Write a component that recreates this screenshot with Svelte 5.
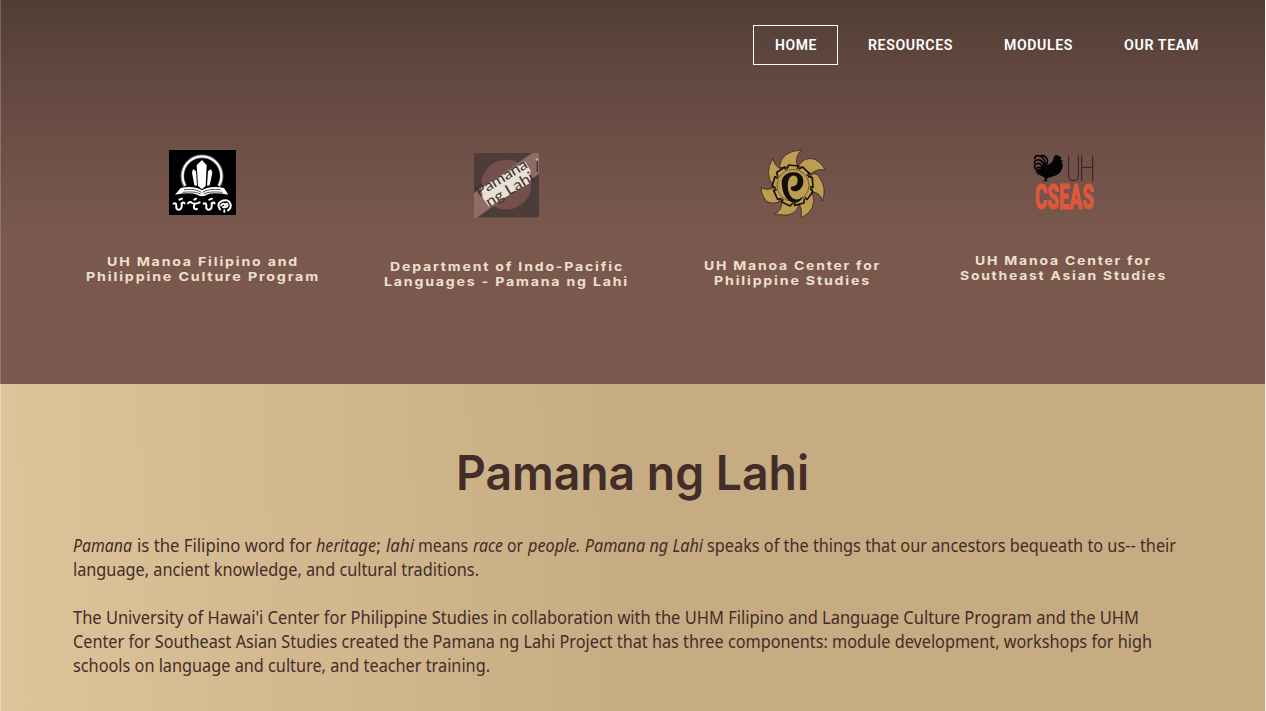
<script>
  const nav = [
    { label: 'HOME', w: 42, active: true },
    { label: 'RESOURCES', w: 85 },
    { label: 'MODULES', w: 69 },
    { label: 'OUR TEAM', w: 75 }
  ];
  const partners = [
    { logo: 'book', top: 150, gap: 39, lines: [['UH Manoa Filipino and', 192], ['Philippine Culture Program', 234]] },
    { logo: 'lahi', top: 153, gap: 41, lines: [['Department of Indo-Pacific', 234], ['Languages - Pamana ng Lahi', 245]] },
    { logo: 'sun', top: 149, gap: 39, lines: [['UH Manoa Center for', 177], ['Philippine Studies', 157]] },
    { logo: 'cseas', top: 153, gap: 42, lines: [['UH Manoa Center for', 177], ['Southeast Asian Studies', 207]] }
  ];
  const paragraphs = [
    [
      [
        ['Pamana', 59, true], ['is the Filipino word for', 175], ['heritage', 60, true, ';', 5], ['lahi', 28, true],
        ['means', 50], ['race', 30, true], ['or', 16], ['people. Pamana ng Lahi', 175, true],
        ['speaks of the things that our ancestors bequeath to us-- their', 469]
      ],
      [['language, ancient knowledge, and cultural traditions.', 406]]
    ],
    [
      [["The University of Hawai'i Center for Philippine Studies in collaboration with the UHM Filipino and Language Culture Program and the UHM", 1066]],
      [['Center for Southeast Asian Studies created the Pamana ng Lahi Project that has three components: module development, workshops for high', 1079]],
      [['schools on language and culture, and teacher training.', 417]]
    ]
  ];

  // Condenses or widens a run of text so that it takes exactly `width` pixels in the line.
  function fit(node, width) {
    const natural = node.getBoundingClientRect().width;
    node.style.transform = `scaleX(${width / natural})`;
    node.style.marginRight = `${width - natural}px`;
  }
</script>

<div class="page">
  <header>
    <nav>
      {#each nav as item}
        <a class:active={item.active}><span class="fit" use:fit={item.w}>{item.label}</span></a>
      {/each}
    </nav>
    <div class="partners">
      {#each partners as p}
        <div class="partner" style="padding-top: {p.top - 90}px">
          {#if p.logo === 'book'}
            <svg width="67" height="65" viewBox="27 24 201 195">
              <rect x="27" y="24" width="201" height="195" fill="#000" />
              <path d="M75 132A59 59 0 1 1 177 132" fill="none" stroke="#777" stroke-width="11" />
              <path d="M76 131A58 58 0 1 1 176 131" fill="none" stroke="#fff" stroke-width="6" />
              <g fill="#fff">
                <path d="M126 54L140 70L137 132L126 142L114 132L110 70Z" />
                <path d="M99 81L108 88L111 131L103 130L96 92Z" />
                <path d="M153 81L144 88L141 131L149 130L157 92Z" />
              </g>
              <path d="M62 138Q100 130 126 145Q152 130 192 138L205 158Q160 150 140 158Q126 168 112 158Q90 150 45 158Z" fill="#fff" />
              <path d="M72 143Q105 139 124 151M182 143Q147 139 128 151M68 151Q105 147 122 156M188 151Q147 147 131 156" fill="none" stroke="#000" stroke-width="2" />
              <g fill="none" stroke="#fff" stroke-width="6" stroke-linecap="round">
                <path d="M41 185Q48 181 49 190Q47 204 57 203Q67 202 65 184Q70 180 74 184M58 173L66 170" />
                <path d="M84 184Q90 177 96 183Q105 188 119 181M103 187Q98 204 111 201M103 173L108 170" />
                <path d="M131 185Q138 181 139 190Q137 204 147 203Q157 202 155 184Q160 180 164 184M148 173L156 170" />
                <path d="M180 202Q169 186 183 178Q205 168 212 187Q213 200 204 205M183 190Q191 180 195 190Q201 180 203 190Q201 198 189 195M193 205L193 209" />
              </g>
            </svg>
          {:else if p.logo === 'lahi'}
            <svg width="65" height="65" viewBox="27 24 195 195">
              <clipPath id="disc"><circle cx="124" cy="119" r="75" /></clipPath>
              <rect x="27" y="24" width="195" height="193" rx="4" fill="#4d3c39" />
              <circle cx="124" cy="119" r="75" fill="#754f4c" />
              <path d="M27 144L202 24H222V86L35 218H27Z" fill="#906b68" />
              <path d="M49 128L181 50L196 76V113L72 185L54 160Z" fill="#e9e1d8" />
              <g fill="#41302d" font-family="Lato, sans-serif" font-size="44">
                <text transform="translate(42 156) rotate(-31)" textLength="174" lengthAdjust="spacingAndGlyphs">Pamana</text>
                <text transform="translate(73 187) rotate(-31)" textLength="160" lengthAdjust="spacingAndGlyphs">ng Lahi</text>
              </g>
              <path d="M217 49V81" stroke="#41302d" stroke-width="4" />
              <circle cx="216" cy="43" r="4" fill="#e3a94d" />
            </svg>
          {:else if p.logo === 'sun'}
            <svg width="66" height="70" viewBox="24 22 198 210">
              <g fill="#bc9d52" stroke="#33281b" stroke-width="2.5" stroke-linejoin="round">
                <path d="M82 78Q86 28 148 25Q127 48 136 72Z" />
                <path d="M140 72Q157 43 189 53Q205 60 221 85Q195 80 178 96Z" />
                <path d="M178 98Q194 92 202 107Q225 137 212 178Q203 151 181 151Z" />
                <path d="M181 151Q198 205 147 229Q153 207 141 184Z" />
                <path d="M142 183Q133 233 68 216Q91 207 89 180Z" />
                <path d="M82 181Q44 193 33 163Q27 150 27 138Q45 148 70 137Z" />
                <path d="M65 134Q34 95 63 50Q66 73 89 83Z" />
              </g>
              <circle cx="123" cy="131" r="56" fill="#bc9d52" />
              <g fill="#bc9d52" stroke="#17120e" stroke-width="5" stroke-linejoin="round">
                {#each [0, 40, 80, 120, 160, 200, 240, 280, 320] as a}
                  <path transform="rotate({a} 123 131)" d="M105 82L110 70L139 73L136 82" />
                {/each}
              </g>
              <circle cx="123" cy="131" r="48" fill="#bc9d52" stroke="#4c3b20" stroke-width="2" />
              <path fill="#100d0b" d="M90 133C85 108 101 92 122 92C145 91 155 105 154 121C153 140 139 150 126 149C115 147 113 135 123 134C134 133 139 122 136 110C132 99 119 99 112 110C103 127 107 158 122 170Q140 180 152 164Q148 182 130 183C105 182 92 158 90 133Z" />
            </svg>
          {:else}
            <svg width="64" height="58" viewBox="24 24 192 174">
              <path fill="#050404" d="M88 43Q90 30 97 31L101 30L106 34L112 37L110 44L118 48L112 51Q119 60 114 72Q108 90 84 95L72 99L66 106L74 109H55L63 105L60 96Q42 91 38 76Q48 79 50 70Q54 59 66 60Q80 61 88 43Z" />
              <g fill="none" stroke="#050404" stroke-width="5" stroke-linecap="round">
                <path d="M64 61Q62 38 47 33Q33 29 32 41M60 64Q54 41 39 45Q31 48 31 54M56 67Q49 51 37 56Q30 61 32 67M55 71Q42 63 34 73M54 77Q44 70 37 80M53 82Q46 79 42 87M67 61Q77 41 60 32Q52 31 47 33" />
              </g>
              <path d="M134 31V91Q134 107 148 107Q163 107 163 91V31M173 31V108M206 31V108M173 67H206" fill="none" stroke="#30221f" stroke-width="3" />
              <text x="33" y="193" textLength="177" lengthAdjust="spacingAndGlyphs" font-family="Roboto, sans-serif" font-weight="800" font-size="106" fill="#df583c" stroke="#df583c" stroke-width="3">CSEAS</text>
            </svg>
          {/if}
          <div class="label" style="padding-top: {p.gap}px">
            {#each p.lines as line}
              <div><span class="fit" use:fit={line[1]}>{line[0]}</span></div>
            {/each}
          </div>
        </div>
      {/each}
    </div>
  </header>

  <main>
    <h1><span class="fit" use:fit={353}>Pamana ng Lahi</span></h1>
    {#each paragraphs as para}
      <p>
        {#each para as line}
          <span class="line">
            {#each line as seg}
              <span class="seg">
                <span class="fit" class:it={seg[2]} use:fit={seg[1]}>{seg[0]}</span>{#if seg[3]}<span class="fit" use:fit={seg[4]}>{seg[3]}</span>{/if}
              </span>
            {/each}
          </span>
        {/each}
      </p>
    {/each}
  </main>
</div>

<style>
  :global(body) { margin: 0; overflow: hidden; background: #f3eeee; }
  .page {
    box-sizing: border-box;
    width: 1266px;
    height: 711px;
    border-right: 1px solid #f3eeee;
    display: flex;
    flex-direction: column;
    overflow: hidden;
    background: linear-gradient(#503e36 0, #61473f 70px, #6d4f46 140px, #7a584e 235px, #7a584e 384px);
  }
  header { height: 384px; flex: none; box-shadow: inset 1px 0 rgba(255, 255, 255, 0.2); }
  nav {
    display: flex;
    justify-content: flex-end;
    gap: 8px;
    box-sizing: border-box;
    height: 90px;
    padding: 25px 45px 0 0;
    font: 600 14px/38px Roboto, sans-serif;
    letter-spacing: 0.6px;
    color: #fff;
  }
  nav a { height: 38px; padding: 0 20.5px; border: 1px solid transparent; white-space: nowrap; }
  nav a.active { border-color: #fff; }
  .fit { display: inline-block; white-space: nowrap; transform-origin: 0 50%; }
  .partners {
    display: grid;
    grid-template-columns: 305px 303px 269px 273px;
    padding-left: 50px;
  }
  .partner { display: flex; flex-direction: column; align-items: center; }
  svg { display: block; overflow: visible; }
  .label {
    text-align: center;
    font: 700 12.3px/15px Inter, sans-serif;
    letter-spacing: 1.6px;
    color: #eee0cb;
  }
  main {
    flex: 1;
    padding: 0 73px;
    color: #432d29;
    background: linear-gradient(88deg, #dfc49b 0, #d6bc93 205px, #d1b58c 395px, #c9b086 550px, #c7ab82 660px);
    box-shadow: inset 1px 0 rgba(255, 255, 255, 0.3);
  }
  h1 {
    margin: 0;
    padding-top: 59px;
    text-align: center;
    font: 600 48px/60px Inter, sans-serif;
  }
  p { margin: 0 0 24px; font: 18.5px/24px "Noto Sans", sans-serif; }
  h1 + p { margin-top: 30px; }
  .line { display: flex; gap: 4.5px; height: 24px; }
  .seg { display: flex; }
  .it { font-style: italic; }
</style>
